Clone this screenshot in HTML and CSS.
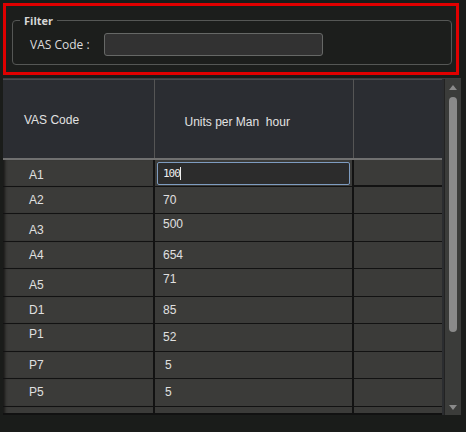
FILE: index.html
```html
<!DOCTYPE html>
<html lang="en">
<head>
    <meta charset="UTF-8">
    <meta name="viewport" content="width=device-width, initial-scale=1.0">
    <link rel="stylesheet" href="styles.css">
    <title>VAS Units</title>
</head>
<body>
    <div id="filterBox">
        <fieldset class="filterGroup">
            <legend>Filter</legend>
            <label for="vasCode">VAS Code :</label>
            <input id="vasCode" type="text">
        </fieldset>
    </div>

    <div id="gridArea">
        <div id="gridBody">
            <table id="unitsGrid">
                <colgroup>
                    <col class="colCode">
                    <col class="colUnits">
                    <col class="colRest">
                </colgroup>
                <thead>
                    <tr>
                        <th class="hCode">VAS Code</th>
                        <th class="hUnits">Units per Man&nbsp; hour</th>
                        <th></th>
                    </tr>
                </thead>
                <tbody>
                    <tr>
                        <td class="code lo">A1</td>
                        <td class="editCell"><div class="editor">100<span class="caret"></span></div></td>
                        <td class="rest first"></td>
                    </tr>
                    <tr>
                        <td class="code">A2</td>
                        <td class="units">70</td>
                        <td class="rest"></td>
                    </tr>
                    <tr>
                        <td class="code lo">A3</td>
                        <td class="units hi">500</td>
                        <td class="rest"></td>
                    </tr>
                    <tr>
                        <td class="code">A4</td>
                        <td class="units">654</td>
                        <td class="rest"></td>
                    </tr>
                    <tr>
                        <td class="code lo">A5</td>
                        <td class="units hi">71</td>
                        <td class="rest"></td>
                    </tr>
                    <tr>
                        <td class="code">D1</td>
                        <td class="units">85</td>
                        <td class="rest"></td>
                    </tr>
                    <tr>
                        <td class="code hi">P1</td>
                        <td class="units">52</td>
                        <td class="rest"></td>
                    </tr>
                    <tr>
                        <td class="code">P7</td>
                        <td class="units pad">5</td>
                        <td class="rest"></td>
                    </tr>
                    <tr>
                        <td class="code">P5</td>
                        <td class="units pad">5</td>
                        <td class="rest"></td>
                    </tr>
                    <tr>
                        <td class="code"></td>
                        <td class="units"></td>
                        <td class="rest"></td>
                    </tr>
                </tbody>
            </table>
        </div>
        <div class="vScroll">
            <span class="arrowUp"></span>
            <div class="thumbTrack"><div class="thumb"></div></div>
            <span class="arrowDown"></span>
        </div>
    </div>
</body>
</html>
```

FILE: styles.css
```css
body{
    margin: 0;
    padding: 3px 0 0 0;
    background-color: #1a1c1a;
    font-family: "Liberation Sans", Arial, sans-serif;
    color: #e0e0e0;
    height: 432px;
    overflow: hidden;
    box-sizing: border-box;
}

/* filter panel */
#filterBox{
    margin: 0 7px 0 3px;
    border: 3px solid #e00000;
    background-color: #1c1e1c;
    padding: 8px 4px 7px 6px;
}

.filterGroup{
    margin: 0;
    border: 1px solid #555755;
    border-radius: 4px;
    padding: 6px 10px 8px 17px;
    display: flex;
    align-items: center;
    font-family: "Open Sans", "Liberation Sans", sans-serif;
}

.filterGroup legend{
    font-size: 11px;
    font-weight: bold;
    color: #d6d6d6;
    padding: 0 4px;
    margin-left: -10px;
    line-height: 13px;
}

.filterGroup label{
    font-size: 12px;
    color: #dcdcdc;
    width: 74px;
}

#vasCode{
    width: 219px;
    height: 23px;
    box-sizing: border-box;
    background-color: #323232;
    border: 1px solid #666866;
    border-radius: 3px;
    outline: none;
}

/* grid */
#gridArea{
    display: flex;
    margin: 3px 5px 0 3px;
    height: 336px;
    border-top: 1px solid #3c3e40;
    background-color: #2b2d30;
}

#gridBody{
    width: 439px;
    overflow: hidden;
    border-bottom: 2px solid #111;
}

#unitsGrid{
    table-layout: fixed;
    border-collapse: collapse;
    width: 439px;
    font-size: 12px;
}

.colCode{ width: 151px; }
.colUnits{ width: 199px; }
.colRest{ width: 89px; }

#unitsGrid th{
    height: 79px;
    box-sizing: border-box;
    background-color: #2b2d32;
    border-left: 1px solid #555;
    border-right: 1px solid #555;
    border-top: 1px solid #4a4c4f;
    border-bottom: 2px solid #707070;
    font-weight: normal;
    color: #e2e2e2;
    text-align: left;
    padding: 0;
}

#unitsGrid th.hCode{
    padding-left: 21px;
    border-left: none;
    padding-top: 2px;
}

#unitsGrid th.hUnits{
    padding-left: 30px;
    padding-top: 6px;
}

#unitsGrid td{
    height: 27.5px;
    box-sizing: border-box;
    background-color: #3b3b39;
    border-bottom: 1px solid #121212;
    border-right: 2px solid #121212;
    padding: 0;
    vertical-align: middle;
}

#unitsGrid td.code{
    padding-left: 26px;
    box-shadow: inset 4px 0 3px -2px rgba(0, 0, 0, 0.6);
}

#unitsGrid td.units{
    padding-left: 8px;
}

#unitsGrid td.pad{
    padding-left: 10px;
}

#unitsGrid td.lo{
    padding-top: 5px;
}

#unitsGrid td.hi{
    padding-bottom: 6px;
}

#unitsGrid td.rest{
    border-right: none;
}

#unitsGrid td.first{
    border-top: 1px solid #606060;
    border-bottom: 2px solid #121212;
}

#unitsGrid td.editCell{
    padding: 2px 2px 1px 2px;
}

.editor{
    height: 23px;
    box-sizing: border-box;
    border: 1px solid #7e9cc0;
    border-radius: 2px;
    background-color: #2c2c2c;
    padding: 4px 0 0 5px;
    font-size: 11px;
    font-family: "DejaVu Sans Mono", monospace;
    letter-spacing: -1px;
    color: #eee;
}

.caret{
    display: inline-block;
    width: 1px;
    height: 13px;
    background-color: #eee;
    vertical-align: -3px;
}

/* vertical scrollbar */
.vScroll{
    width: 17px;
    margin-left: 2px;
    background-color: #3b3c3a;
    border-left: 1px solid #232323;
    display: flex;
    flex-direction: column;
    align-items: center;
    padding: 6px 0 5px 0;
    box-sizing: border-box;
}

.arrowUp{
    width: 0;
    height: 0;
    border-left: 4px solid transparent;
    border-right: 4px solid transparent;
    border-bottom: 5px solid #8a8a8a;
}

.arrowDown{
    width: 0;
    height: 0;
    border-left: 4px solid transparent;
    border-right: 4px solid transparent;
    border-top: 5px solid #8a8a8a;
}

.thumbTrack{
    flex: 1;
    padding-top: 7px;
}

.thumb{
    width: 8px;
    height: 235px;
    border-radius: 4px;
    background-color: #8a8a8a;
}
```
